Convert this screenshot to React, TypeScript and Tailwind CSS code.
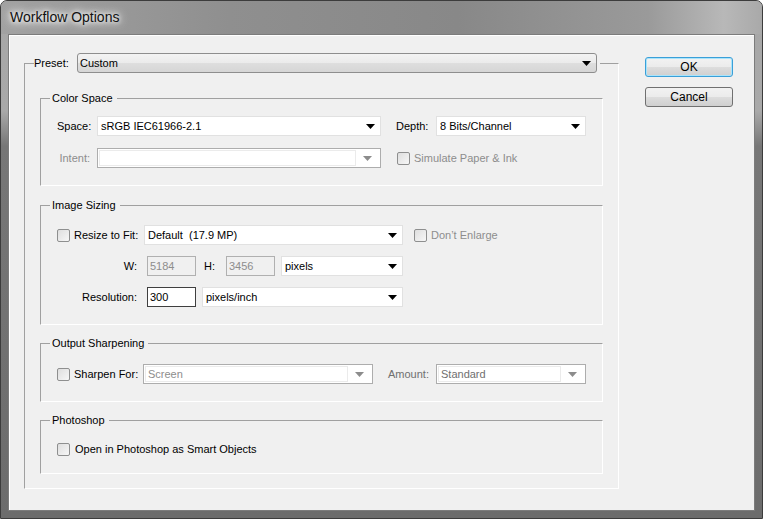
import React from "react";

type SelectProps = {
  value?: string;
  className: string;
  variant?: "flat" | "disabled" | "button";
};

function Arrow({ gray }: { gray?: boolean }) {
  return (
    <svg width="9" height="5" viewBox="0 0 9 5" className="shrink-0">
      <path d="M0 0h9L4.5 5z" fill={gray ? "#8c8c8c" : "#000"} />
    </svg>
  );
}

function Select({ value = "", className, variant = "flat" }: SelectProps) {
  if (variant === "disabled") {
    return (
      <div className={`h-[20px] flex border border-[#adadad] bg-white p-px ${className}`}>
        <div className="flex-1 flex items-center border border-[#ebebeb] pl-[2px] text-[#8d8d8d] truncate">
          {value}
        </div>
        <div className="w-[23px] flex items-center justify-center">
          <Arrow gray />
        </div>
      </div>
    );
  }
  if (variant === "button") {
    return (
      <div
        className={`h-[20px] flex items-center rounded-[3px] border border-[#8e8e8e] pl-[2px] pr-[5px] bg-[linear-gradient(180deg,#f3f3f3_0%,#ebebeb_50%,#dedede_51%,#d6d6d6_100%)] ${className}`}
      >
        <span className="flex-1">{value}</span>
        <Arrow />
      </div>
    );
  }
  return (
    <div className={`h-[20px] flex items-center border border-[#e1e1e1] bg-white pl-[3px] pr-[5px] ${className}`}>
      <span className="flex-1 truncate">{value}</span>
      <Arrow />
    </div>
  );
}

function Checkbox() {
  return (
    <div className="w-[13px] h-[13px] shrink-0 rounded-[2px] border border-[#8e8f8f] bg-[linear-gradient(135deg,#dedede,#f7f7f7)]" />
  );
}

function Group({ title, className, children }: { title: string; className: string; children: React.ReactNode }) {
  return (
    <fieldset
      className={`mx-[15px] border border-[#a0a0a0] border-r-white border-b-white ${className}`}
    >
      <legend className="ml-[9px] pl-[2px] pr-[4px] h-[14px] leading-[14px]">{title}</legend>
      {children}
    </fieldset>
  );
}

function Button({ label, focused }: { label: string; focused?: boolean }) {
  return (
    <button
      className={`w-[88px] h-[20px] rounded-[3px] border text-[12px] leading-none text-black bg-[linear-gradient(180deg,#f2f2f2_0%,#ebebeb_50%,#dddddd_51%,#cfcfcf_100%)] ${
        focused ? "border-[#3a9fd8] shadow-[inset_0_0_0_1px_#a9e4fb]" : "border-[#707070]"
      }`}
    >
      {label}
    </button>
  );
}

export default function App() {
  return (
    <div className="w-[763px] h-[519px] flex flex-col overflow-hidden rounded-t-[7px] border border-[#3c3c3c] bg-[linear-gradient(180deg,#a7a7a7_0px,#a9a9a9_110px,#777777_145px,#6c6c6c_100%)] font-['Liberation_Sans',Arial,sans-serif] text-[11px] text-black">
      {/* title bar */}
      <div className="h-[33px] shrink-0 flex items-center pl-[9px] bg-[linear-gradient(90deg,#a2a2a2_0%,#8f8f8f_30%,#888888_60%,#9a9a9a_85%,#b8b8b8_95%,#a9a9a9_100%)]">
        <span className="text-[14px] text-[#111] [text-shadow:0_0_8px_#fff,0_0_12px_#fff,0_0_4px_#fff]">
          Workflow Options
        </span>
      </div>

      {/* client area */}
      <div className="mx-[7px] h-[477px] shrink-0 border border-[#7c7c7c] bg-[#f0f0f0] shadow-[inset_1px_1px_0_#fff] flex items-start pl-[15px] pt-[18px]">
        <fieldset className="w-[595px] border border-[#a0a0a0] border-r-white border-b-white">
          <legend className="ml-[9px] pr-[3px]">
            <div className="flex items-center">
              <span className="w-[43px]">Preset:</span>
              <Select variant="button" value="Custom" className="w-[520px]" />
            </div>
          </legend>

          <div className="pt-[18px] pb-[14px] flex flex-col">
            {/* Color Space */}
            <Group title="Color Space" className="">
              <div className="pl-[16px] pt-[11px] pb-[17px] flex flex-col gap-[12px]">
                <div className="flex items-center">
                  <span className="w-[40px] text-right pr-[7px]">Space:</span>
                  <Select value="sRGB IEC61966-2.1" className="w-[284px]" />
                  <span className="ml-[15px] w-[40px]">Depth:</span>
                  <Select value="8 Bits/Channel" className="w-[150px]" />
                </div>
                <div className="flex items-center">
                  <span className="w-[40px] text-right pr-[7px] text-[#8d8d8d]">Intent:</span>
                  <Select variant="disabled" className="w-[284px]" />
                  <div className="ml-[16px]">
                    <Checkbox />
                  </div>
                  <span className="ml-[4px] text-[#8d8d8d]">Simulate Paper &amp; Ink</span>
                </div>
              </div>
            </Group>

            {/* Image Sizing */}
            <Group title="Image Sizing" className="mt-[12px]">
              <div className="pl-[16px] pt-[13px] pb-[17px] flex flex-col gap-[11px]">
                <div className="flex items-center">
                  <Checkbox />
                  <span className="ml-[4px] w-[70px]">Resize to Fit:</span>
                  <Select value={"Default\u00a0 (17.9 MP)"} className="w-[259px]" />
                  <div className="ml-[11px]">
                    <Checkbox />
                  </div>
                  <span className="ml-[4px] text-[#8d8d8d]">Don’t Enlarge</span>
                </div>
                <div className="flex items-center">
                  <span className="w-[90px] text-right pr-[10px]">W:</span>
                  <div className="w-[49px] h-[20px] flex items-center border border-[#b0b0b0] bg-[#f0f0f0] pl-[2px] text-[#8d8d8d]">
                    5184
                  </div>
                  <span className="ml-[8px] w-[22px]">H:</span>
                  <div className="w-[49px] h-[20px] flex items-center border border-[#b0b0b0] bg-[#f0f0f0] pl-[2px] text-[#8d8d8d]">
                    3456
                  </div>
                  <Select value="pixels" className="ml-[6px] w-[122px]" />
                </div>
                <div className="flex items-center">
                  <span className="w-[90px] text-right pr-[10px]">Resolution:</span>
                  <div className="w-[49px] h-[20px] flex items-center border border-[#3f3f3f] bg-white pl-[2px]">
                    300
                  </div>
                  <Select value="pixels/inch" className="ml-[6px] w-[201px]" />
                </div>
              </div>
            </Group>

            {/* Output Sharpening */}
            <Group title="Output Sharpening" className="mt-[11px]">
              <div className="pl-[16px] pt-[14px] pb-[17px] flex items-center">
                <Checkbox />
                <span className="ml-[4px] w-[69px]">Sharpen For:</span>
                <Select variant="disabled" value="Screen" className="w-[230px]" />
                <span className="ml-[15px] w-[48px] text-[#6f6f6f]">Amount:</span>
                <Select variant="disabled" value="Standard" className="w-[150px] [&>div:first-child]:text-[#6f6f6f]" />
              </div>
            </Group>

            {/* Photoshop */}
            <Group title="Photoshop" className="mt-[11px]">
              <div className="pl-[16px] pt-[12px] pb-[14px] h-[46px] flex items-center">
                <Checkbox />
                <span className="ml-[5px]">Open in Photoshop as Smart Objects</span>
              </div>
            </Group>
          </div>
        </fieldset>

        <div className="ml-[26px] pt-[4px] flex flex-col gap-[10px]">
          <Button label="OK" focused />
          <Button label="Cancel" />
        </div>
      </div>
    </div>
  );
}
